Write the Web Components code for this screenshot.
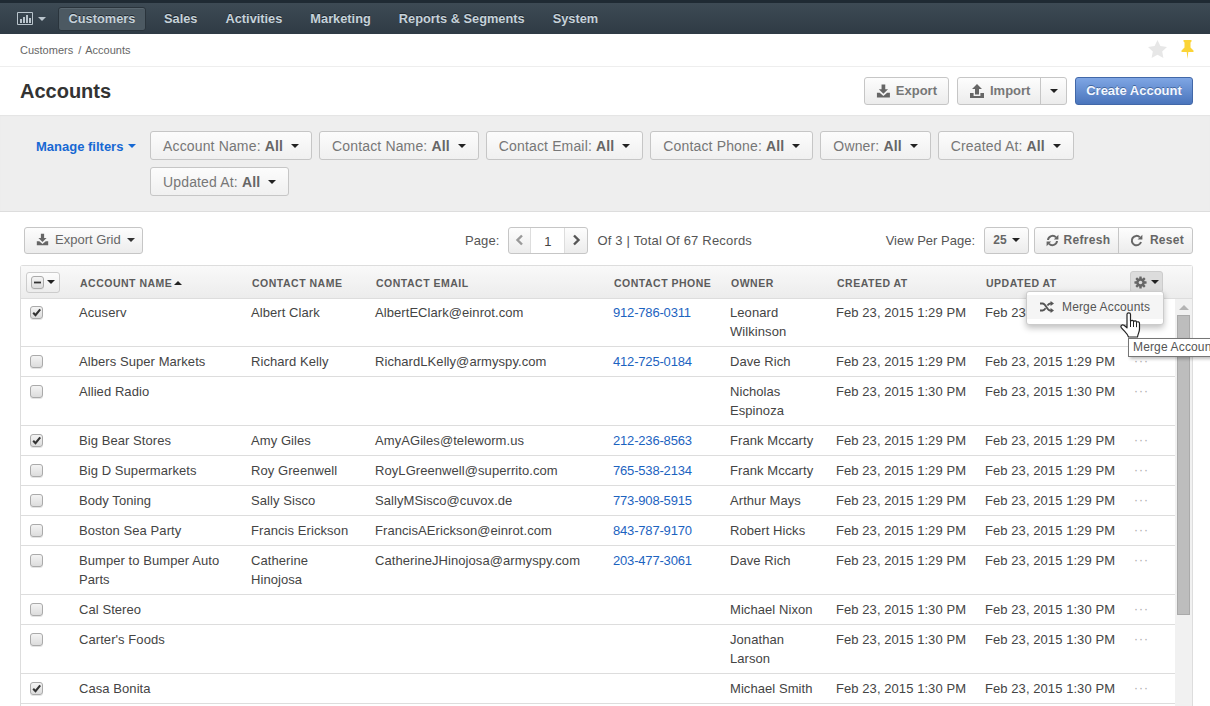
<!DOCTYPE html>
<html>
<head>
<meta charset="utf-8">
<title>Accounts</title>
<style>
  html { overflow: hidden; }
  body { margin: 0; height: 706px; overflow: hidden; background: #fff; color: #444; font: 12px "Liberation Sans", Arial, sans-serif; }
</style>
</head>
<body>
<crm-nav></crm-nav>
<crm-breadcrumb></crm-breadcrumb>
<crm-title></crm-title>
<crm-filters></crm-filters>
<crm-toolbar></crm-toolbar>
<accounts-grid></accounts-grid>

<script>
const icons = {
  download: '<svg width="16" height="16" viewBox="0 0 16 16"><path fill="currentColor" d="M6 1h4v5h3l-5 5-5-5h3z"/><path fill="currentColor" d="M1 10h3l4 3.4L12 10h3v5H1z"/></svg>',
  upload: '<svg width="16" height="16" viewBox="0 0 16 16"><path fill="currentColor" d="M8 1l5 5h-3v5.5H6V6H3z"/><path fill="currentColor" d="M1 10h3.6v3h6.8v-3H15v5H1z"/></svg>',
  refresh: '<svg width="13" height="13" viewBox="0 0 13 13"><path fill="none" stroke="currentColor" stroke-width="2" d="M2 6a4.6 4.6 0 0 1 8-2.6M11 7a4.6 4.6 0 0 1-8 2.6"/><path fill="currentColor" d="M12.4.8v4.6H7.8zM.6 12.2V7.6h4.6z"/></svg>',
  undo: '<svg width="13" height="13" viewBox="0 0 13 13"><path fill="none" stroke="currentColor" stroke-width="2" d="M9.800 3.200A4.700 4.700 0 1 0 11 8"/><path fill="currentColor" d="M12.400.8v4.800H7.600z"/></svg>',
  gear: '<svg width="13" height="13" viewBox="0 0 16 16"><g fill="currentColor"><rect x="6.5" y=".5" width="3" height="15" rx=".5"/><rect x="6.5" y=".5" width="3" height="15" rx=".5" transform="rotate(45 8 8)"/><rect x="6.5" y=".5" width="3" height="15" rx=".5" transform="rotate(90 8 8)"/><rect x="6.5" y=".5" width="3" height="15" rx=".5" transform="rotate(135 8 8)"/><circle cx="8" cy="8" r="5.300"/></g><circle cx="8" cy="8" r="2.200" fill="#dcdcdc"/></svg>',
  random: '<svg width="14" height="12" viewBox="0 0 14 12"><path fill="none" stroke="currentColor" stroke-width="1.8" d="M0 2.5h2.6c3.4 0 4.2 7 7.6 7h1M0 9.5h2.6c1.300 0 2.200-1 3-2.200M7.400 4.600c.8-1.200 1.600-2.100 2.800-2.100h1"/><path fill="currentColor" d="M10.600 0L14 2.500 10.600 5zM10.600 7L14 9.500 10.600 12z"/></svg>',
  chart: '<svg width="16" height="13" viewBox="0 0 16 13"><path fill="none" stroke="#b9c4cc" d="M.5.500h15v12H.5z"/><path fill="#b9c4cc" d="M3 7h2v4H3zM6 5h2v6H6zM9 3h2v8H9zM12 6h2v5h-2z"/></svg>',
  star: '<svg width="19" height="18" viewBox="0 0 19 18"><path fill="#e7e7e7" d="M9.500 0l2.900 6 6.600.9-4.800 4.600 1.200 6.500-5.900-3.200L3.600 18l1.200-6.500L0 6.900 6.600 6z"/></svg>',
  pin: '<svg width="13" height="19" viewBox="0 0 13 19"><path fill="#fbd437" d="M2.500 0h8v1.500L9.500 2.500V7.500l3 3V12H7.300L6.500 19l-.8-7H.500v-1.500l3-3V2.500l-1-1z"/></svg>'
};

const caret = (color = 'currentColor') => `<svg width="8" height="4" viewBox="0 0 8 4" style="flex:none"><path fill="${color}" d="M0 0h8L4 4z"/></svg>`;

const buttonCss = `
  .btn { display: inline-flex; align-items: center; box-sizing: border-box; height: 28px; color: #666; border: 1px solid #c6c6c6; border-radius: 3px; background: linear-gradient(#fdfdfd, #ececec); white-space: nowrap; }
`;

class CrmNav extends HTMLElement {
  constructor() {
    super();
    this.attachShadow({mode: 'open'});
    const items = ['Sales', 'Activities', 'Marketing', 'Reports &amp; Segments', 'System'];
    this.shadowRoot.innerHTML = `
    <style>
      :host { display: block; height: 34px; box-sizing: border-box; border-top: 3px solid #1f2a33; background: linear-gradient(#3d4a54, #2f3b45); }
      nav { display: flex; align-items: center; height: 31px; padding-left: 17px; }
      .brand { display: flex; align-items: center; gap: 5px; width: 41px; color: #b9c4cc; }
      a { padding: 0 10px; margin-right: 8px; font: bold 12.8px/24px "Liberation Sans", Arial, sans-serif; color: #c6d2da; text-shadow: 0 -1px 0 #1d262d; white-space: nowrap; }
      a.active { margin-right: 8px; box-sizing: border-box; width: 88px; text-align: center; background: #4c5962; border: 1px solid #2a343c; border-radius: 3px; line-height: 22px; box-shadow: inset 0 1px 0 #5a6770; padding: 0; }
    </style>
    <nav>
      <span class="brand">${icons.chart}${caret('#b9c4cc')}</span>
      <a class="active">Customers</a>
      ${items.map(i => `<a>${i}</a>`).join('')}
    </nav>`;
  }
}
customElements.define('crm-nav', CrmNav);

class CrmBreadcrumb extends HTMLElement {
  constructor() {
    super();
    this.attachShadow({mode: 'open'});
    this.shadowRoot.innerHTML = `
    <style>
      :host { display: flex; align-items: center; justify-content: space-between; height: 33px; box-sizing: border-box; padding: 0 16px 0 20px; border-bottom: 1px solid #eee; font-size: 11px; color: #666; }
      .marks { display: flex; align-items: center; gap: 14px; padding-bottom: 2px; }
      .sep { margin: 0 4px 0 5px; }
      svg { display: block; }
    </style>
    <span>Customers<span class="sep">/</span>Accounts</span>
    <span class="marks">${icons.star}${icons.pin}</span>`;
  }
}
customElements.define('crm-breadcrumb', CrmBreadcrumb);

class CrmTitle extends HTMLElement {
  constructor() {
    super();
    this.attachShadow({mode: 'open'});
    this.shadowRoot.innerHTML = `
    <style>
      ${buttonCss}
      :host { display: flex; align-items: center; height: 48px; box-sizing: border-box; padding: 0 17px 0 20px; gap: 8px; }
      h1 { flex: 1; margin: 0; font: bold 20px "Liberation Sans", Arial, sans-serif; color: #333; }
      .btn { font-size: 13px; font-weight: bold; color: #777; gap: 5px; padding: 0 11px 1px; }
      .btn svg { color: #666; }
      .export { width: 85px; }
      .import { width: 110px; padding: 0; gap: 0; }
      .import .main { display: flex; align-items: center; gap: 5px; flex: 1; padding: 0 0 1px 11px; height: 100%; border-right: 1px solid #c6c6c6; box-sizing: border-box; }
      .import .drop { width: 25px; display: flex; justify-content: center; color: #222; }
      .import .drop svg { color: #222; }
      .create { width: 118px; padding: 0 0 1px; justify-content: center; color: #f4f8ff; border-color: #4268a8; background: linear-gradient(#7fa6e4, #4a75bc); text-shadow: 0 -1px 0 #44689f; }
    </style>
    <h1>Accounts</h1>
    <span class="btn export">${icons.download}Export</span>
    <span class="btn import"><span class="main">${icons.upload}Import</span><span class="drop">${caret()}</span></span>
    <span class="btn create">Create Account</span>`;
  }
}
customElements.define('crm-title', CrmTitle);

class FilterChip extends HTMLElement {
  constructor() {
    super();
    this.attachShadow({mode: 'open'});
    this.shadowRoot.innerHTML = `
    <style>
      ${buttonCss}
      :host { display: block; }
      .btn { height: 29px; padding: 1px 12px 0; gap: 8px; font-size: 14px; letter-spacing: .15px; color: #777; background: linear-gradient(#fcfcfc, #f0f0f0); }
      .btn svg { color: #222; }
      b { color: #666; }
    </style>
    <span class="btn"><span><slot></slot>: <b>All</b></span>${caret()}</span>`;
  }
}
customElements.define('filter-chip', FilterChip);

class CrmFilters extends HTMLElement {
  constructor() {
    super();
    this.attachShadow({mode: 'open'});
    const names = ['Account Name', 'Contact Name', 'Contact Email', 'Contact Phone', 'Owner', 'Created At', 'Updated At'];
    this.shadowRoot.innerHTML = `
    <style>
      :host { display: flex; height: 97px; box-sizing: border-box; padding: 16px 17px 0 36px; background: #eee; border-bottom: 1px solid #ddd; box-shadow: inset 0 1px 1px #e4e4e4; }
      .manage { display: flex; align-items: center; align-self: flex-start; gap: 5px; height: 29px; padding-top: 1px; box-sizing: border-box; width: 114px; font: bold 13px "Liberation Sans", Arial, sans-serif; color: #1668d3; white-space: nowrap; }
      .chips { display: flex; flex-wrap: wrap; gap: 7px; align-content: flex-start; flex: 1; }
    </style>
    <span class="manage">Manage filters ${caret()}</span>
    <div class="chips">${names.map(n => `<filter-chip>${n}</filter-chip>`).join('')}</div>`;
  }
}
customElements.define('crm-filters', CrmFilters);

class CrmToolbar extends HTMLElement {
  constructor() {
    super();
    this.attachShadow({mode: 'open'});
    this.shadowRoot.innerHTML = `
    <style>
      ${buttonCss}
      :host { display: grid; grid-template-columns: 1fr auto 1fr; align-items: center; height: 28px; margin: 14px 17px 11px 24px; font-size: 13px; letter-spacing: .1px; color: #555; }
      .btn { font-size: 12px; font-weight: bold; height: 27px; color: #666; }
      .export { justify-self: start; width: 119px; padding: 0 0 1px 11px; gap: 6px; font-size: 13px; font-weight: normal; letter-spacing: 0; }
      .export svg:first-child { color: #666; width: 13px; height: 13px; }
      .mid, .right { display: flex; align-items: center; }
      .mid > span:first-child { margin-right: 9px; }
      .mid > span:last-child { letter-spacing: .18px; }
      .pager { height: 27px; width: 80px; margin-right: 9px; font-weight: normal; }
      .pager i { flex: none; display: flex; justify-content: center; width: 21px; font-style: normal; }
      .pager i:last-child { width: 22px; }
      .pager .one { flex: 1; height: 100%; background: #fff; border: solid #ddd; border-width: 0 1px; text-align: center; line-height: 27px; color: #444; font-size: 13px; }
      .right { justify-self: end; letter-spacing: 0; }
      .per { width: 45px; justify-content: center; gap: 5px; margin: 0 5px 0 9px; }
      .group { width: 159px; padding: 0; letter-spacing: .3px; }
      .group span { display: flex; align-items: center; justify-content: center; gap: 5px; height: 100%; }
      .group span:first-child { width: 84px; padding-left: 3px; box-sizing: border-box; border-right: 1px solid #c6c6c6; }
      .group span:last-child { flex: 1; gap: 7px; padding-left: 3px; }
    </style>
    <span class="btn export">${icons.download}<span>Export Grid</span>${caret('#333')}</span>
    <div class="mid">
      <span>Page:</span>
      <span class="btn pager">
        <i><svg width="9" height="12" viewBox="0 0 9 12"><path fill="none" stroke="#999" stroke-width="2.400" d="M7 1.500L2.500 6 7 10.500"/></svg></i>
        <span class="one">1</span>
        <i><svg width="9" height="12" viewBox="0 0 9 12"><path fill="none" stroke="#555" stroke-width="2.400" d="M2 1.500L6.500 6 2 10.500"/></svg></i>
      </span>
      <span>Of 3 | Total Of 67 Records</span>
    </div>
    <div class="right">
      <span>View Per Page:</span>
      <span class="btn per">25 ${caret('#222')}</span>
      <span class="btn group"><span>${icons.refresh}Refresh</span><span>${icons.undo}Reset</span></span>
    </div>`;
  }
}
customElements.define('crm-toolbar', CrmToolbar);

class GridCheck extends HTMLElement {
  constructor() {
    super();
    this.attachShadow({mode: 'open'});
    const mark = this.getAttribute('mark');
    const glyph = mark === 'minus'
      ? '<path d="M2 4.600h7v1.800H2z" fill="#333"/>'
      : mark === 'check'
        ? '<path d="M2.200 5.800L4.500 8.200 9.200 2.300" fill="none" stroke="#333" stroke-width="2.100"/>'
        : '';
    this.shadowRoot.innerHTML = `
    <style>
      :host { display: block; width: 11px; height: 11px; border: 1px solid #aaa; border-radius: 3px; background: linear-gradient(#f4f4f4, #dcdcdc); box-shadow: 0 1px 0 #e4e4e4; }
      svg { display: block; }
    </style>
    <svg width="11" height="11" viewBox="0 0 11 11">${glyph}</svg>`;
  }
}
customElements.define('grid-check', GridCheck);

const accounts = [
  ['Acuserv', 'Albert Clark', 'AlbertEClark@einrot.com', '912-786-0311', 'Leonard Wilkinson', '1:29', '1:29', 1],
  ['Albers Super Markets', 'Richard Kelly', 'RichardLKelly@armyspy.com', '412-725-0184', 'Dave Rich', '1:29', '1:29', 0],
  ['Allied Radio', '', '', '', 'Nicholas Espinoza', '1:30', '1:30', 0],
  ['Big Bear Stores', 'Amy Giles', 'AmyAGiles@teleworm.us', '212-236-8563', 'Frank Mccarty', '1:29', '1:29', 1],
  ['Big D Supermarkets', 'Roy Greenwell', 'RoyLGreenwell@superrito.com', '765-538-2134', 'Frank Mccarty', '1:29', '1:29', 0],
  ['Body Toning', 'Sally Sisco', 'SallyMSisco@cuvox.de', '773-908-5915', 'Arthur Mays', '1:29', '1:29', 0],
  ['Boston Sea Party', 'Francis Erickson', 'FrancisAErickson@einrot.com', '843-787-9170', 'Robert Hicks', '1:29', '1:29', 0],
  ['Bumper to Bumper Auto Parts', 'Catherine Hinojosa', 'CatherineJHinojosa@armyspy.com', '203-477-3061', 'Dave Rich', '1:29', '1:29', 0],
  ['Cal Stereo', '', '', '', 'Michael Nixon', '1:30', '1:30', 0],
  ["Carter's Foods", '', '', '', 'Jonathan Larson', '1:30', '1:30', 0],
  ['Casa Bonita', '', '', '', 'Michael Smith', '1:30', '1:30', 1]
];

const columns = `<colgroup><col style="width:50px"><col style="width:172px"><col style="width:124px"><col style="width:238px"><col style="width:117px"><col style="width:106px"><col style="width:149px"><col style="width:150px"><col style="width:48px"></colgroup>`;

class AccountsGrid extends HTMLElement {
  constructor() {
    super();
    this.attachShadow({mode: 'open'});
    const heads = ['Contact Name', 'Contact Email', 'Contact Phone', 'Owner', 'Created At', 'Updated At'];
    const rows = accounts.map(a => `
      <tr>
        <td class="check"><grid-check ${a[7] ? 'mark="check"' : ''}></grid-check></td>
        <td>${a[0]}</td>
        <td>${a[1]}</td>
        <td>${a[2]}</td>
        <td><a>${a[3]}</a></td>
        <td>${a[4]}</td>
        <td class="nw">Feb 23, 2015 ${a[5]} PM</td>
        <td class="nw">Feb 23, 2015 ${a[6]} PM</td>
        <td class="dots">···</td>
      </tr>`).join('');
    this.shadowRoot.innerHTML = `
    <style>
      ${buttonCss}
      :host { display: block; position: relative; margin: 0 17px 0 20px; height: 441px; box-sizing: border-box; border: 1px solid #ddd; border-bottom: 0; border-radius: 3px 3px 0 0; font-size: 13px; letter-spacing: .07px; color: #444; }
      table { table-layout: fixed; width: 1154px; border-collapse: collapse; }
      .head { background: linear-gradient(#f9f9f9, #ececec); border-bottom: 1px solid #ddd; height: 32px; }
      th { padding: 1px 0 0 9px; height: 32px; box-sizing: border-box; text-align: left; font: bold 10.500px "Liberation Sans", Arial, sans-serif; color: #5c5c5c; text-transform: uppercase; letter-spacing: .5px; white-space: nowrap; }
      th:first-child { padding: 0 0 0 5px; }
      th svg { vertical-align: 2px; margin-left: -2px; }
      .sel { height: 21px; width: 34px; justify-content: center; gap: 5px; border-color: #ccc; }
      .body { display: flex; height: 407px; overflow: hidden; }
      .body table { align-self: flex-start; }
      td { padding: 5px 8px; vertical-align: top; line-height: 19px; border-bottom: 1px solid #ddd; }
      tr:first-child td { padding-top: 4px; }
      td.check { padding-left: 9px; padding-top: 8px; }
      tr:first-child td.check { padding-top: 7px; }
      td.nw { white-space: nowrap; }
      td.dots { padding-left: 7px; color: #aaa; letter-spacing: 1px; font-size: 12px; }
      td a { color: #1c63bf; letter-spacing: -.18px; }
      .scroll { position: relative; flex: none; width: 17px; background: #f1f1f1; }
      .scroll::before { content: ""; position: absolute; left: 4px; top: 6px; border: 5px solid transparent; border-top: 0; border-bottom: 5px solid #b4b4b4; }
      .thumb { position: absolute; left: 2px; top: 16px; width: 13px; height: 300px; box-sizing: border-box; background: #bdbdbd; border: 1px solid #aaa; }
      .gear { position: absolute; left: 1109px; top: 5px; height: 22px; width: 33px; justify-content: center; gap: 4px; background: #dcdcdc; border-color: #ccc; color: #666; }
      .menu { position: absolute; left: 1005px; top: 25px; width: 138px; height: 34px; box-sizing: border-box; padding-top: 3px; background: #fff; border: 1px solid #ccc; border-radius: 3px; box-shadow: 0 3px 6px rgba(0,0,0,.25); }
      .menu div { display: flex; align-items: center; gap: 8px; height: 24px; padding-left: 13px; background: #f5f5f5; color: #555; font-size: 12px; letter-spacing: .15px; }
      .tip { position: absolute; left: 1107px; top: 72px; height: 19px; box-sizing: border-box; padding: 0 4px; line-height: 17px; background: #fff; border: 1px solid #767676; box-shadow: 2px 2px 3px rgba(0,0,0,.25); color: #555; font-size: 12px; letter-spacing: .15px; white-space: nowrap; }
      .hand { position: absolute; left: 1099px; top: 46px; }
    </style>
    <div class="head">
      <table>${columns}
        <tr>
          <th><span class="btn sel"><grid-check mark="minus"></grid-check>${caret('#222')}</span></th>
          <th>Account Name <svg width="8" height="4" viewBox="0 0 8 4"><path fill="#222" d="M4 0l4 4H0z"/></svg></th>
          ${heads.map(h => `<th>${h}</th>`).join('')}
          <th></th>
        </tr>
      </table>
    </div>
    <div class="body">
      <table>${columns}${rows}</table>
      <div class="scroll"><div class="thumb"></div></div>
    </div>
    <span class="btn gear">${icons.gear}${caret('#222')}</span>
    <div class="menu"><div>${icons.random}Merge Accounts</div></div>
    <div class="tip">Merge Accounts</div>
    <svg class="hand" width="21" height="26" viewBox="0 0 21 26"><path fill="#fff" stroke="#222" stroke-width="1.200" stroke-linejoin="round" d="M7 2.200c0-1.800 3.500-1.800 3.500 0V9c1-1 3-1 3 .5 1-1 3-.8 3 .7 1-.8 3-.5 3 1.200V17c0 3-1.500 4.500-2 8H8.500C7.500 21.500 5 20 1.500 15.800c-1.500-2 .5-3.500 2.500-2.500L7 15.800z"/><path fill="none" stroke="#222" d="M10.500 9v6M13.500 9.500v5.500M16.500 10.200v5"/></svg>`;
  }
}
customElements.define('accounts-grid', AccountsGrid);
</script>
</body>
</html>
